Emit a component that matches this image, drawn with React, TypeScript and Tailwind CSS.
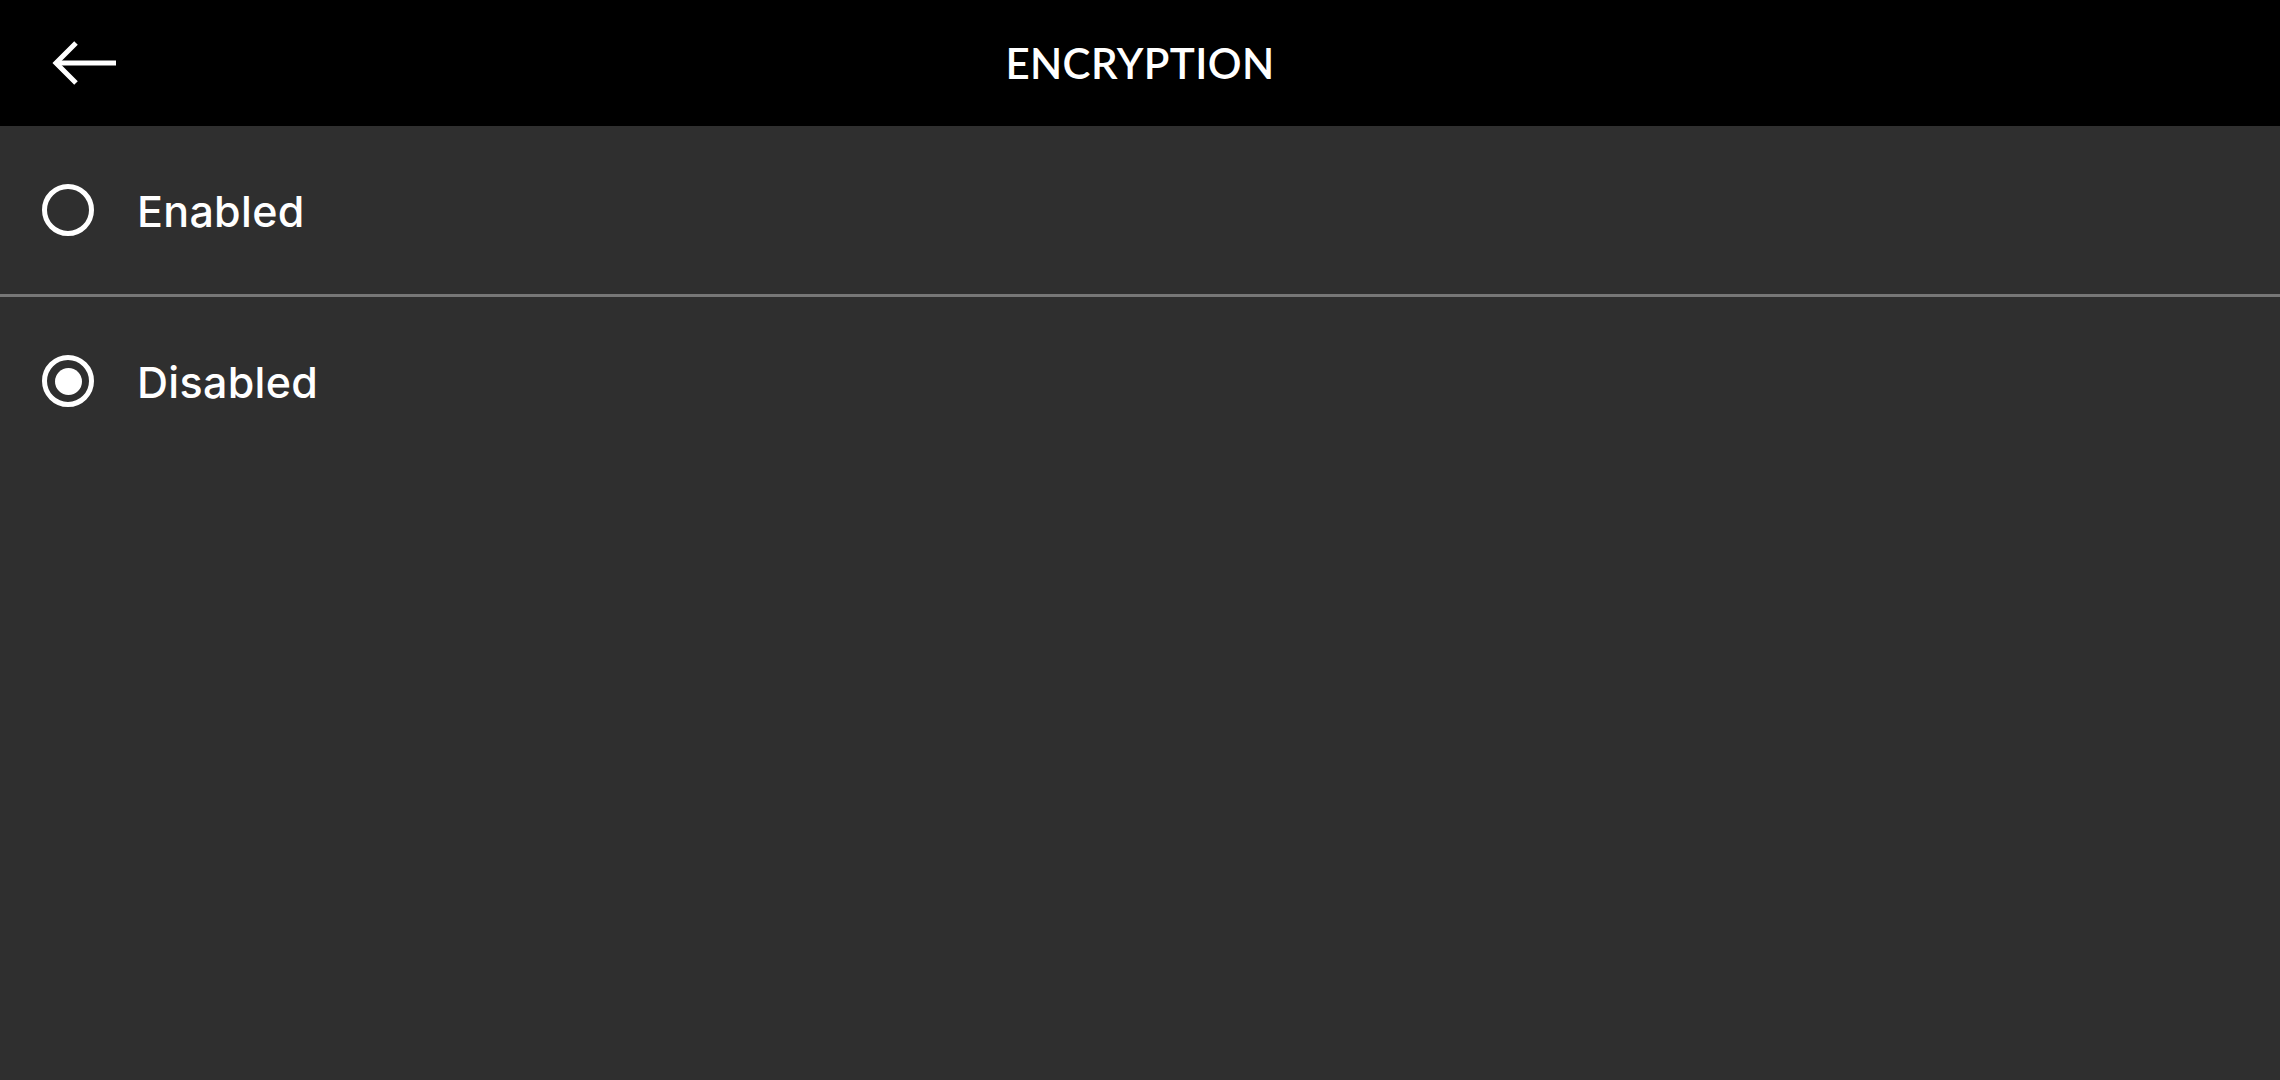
import React, { useState } from 'react';

const options = ['Enabled', 'Disabled'];

function Radio({ checked }: { checked: boolean }) {
  return (
    <span className="flex h-[52px] w-[52px] items-center justify-center rounded-full border-[5px] border-white">
      {checked && <span className="h-[27px] w-[27px] rounded-full bg-white" />}
    </span>
  );
}

export default function App() {
  const [value, setValue] = useState('Disabled');

  return (
    <div
      className="flex h-[1080px] w-[2280px] flex-col bg-[#2f2f2f] text-white"
      style={{ fontFamily: 'Lato, "Open Sans", sans-serif' }}
    >
      <header className="relative flex h-[126px] shrink-0 items-center justify-center bg-black">
        <button className="absolute left-[50px] top-[40px] flex h-[46px] w-[70px] items-center">
          <svg width="70" height="46" viewBox="0 0 70 46" fill="none" stroke="white" strokeWidth="5">
            <path d="M66 23H6" />
            <path d="M26 3L6 23L26 43" />
          </svg>
        </button>
        <h1 className="text-[42px] font-semibold tracking-[0.4px]">ENCRYPTION</h1>
      </header>

      <div className="flex flex-col">
        {options.map((opt, i) => (
          <React.Fragment key={opt}>
            {i > 0 && <div className="h-[3px] bg-[#777777]" />}
            <button
              onClick={() => setValue(opt)}
              className="flex h-[168px] items-center gap-[43px] pl-[42px] text-left"
            >
              <Radio checked={value === opt} />
              <span className="mt-[3px] font-['Inter',sans-serif] text-[43px] font-medium tracking-[0.3px]">
                {opt}
              </span>
            </button>
          </React.Fragment>
        ))}
      </div>
    </div>
  );
}
